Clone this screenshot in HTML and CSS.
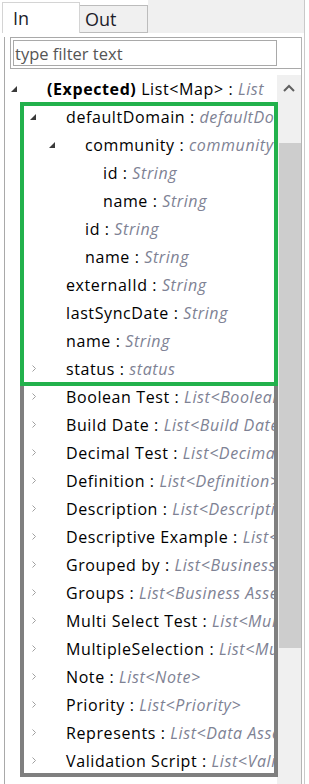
FILE: index.html
```html
<!DOCTYPE html>
<html lang="en">
<head>
    <meta charset="UTF-8">
    <meta name="viewport" content="width=device-width, initial-scale=1.0">
    <title>Mapping tree</title>
    <link rel="stylesheet" href="styles.css">
</head>
<body>
    <div class="view">
        <div class="tabbar">
            <div class="tab active">In</div>
            <div class="tab">Out</div>
            <div class="tab-fill"></div>
        </div>

        <div class="panel">
            <div class="filter">
                <input class="filter-field" type="text" placeholder="type filter text">
            </div>

            <div class="tree">
                <div class="rows">
                    <div class="row l0">
                        <span class="tw"><svg viewBox="0 0 7 8" width="7" height="8"><polygon class="open" points="6,1 6,7 0,7"/></svg></span>
                        <span class="lbl"><b>(Expected)</b> List&lt;Map&gt; : <i>List</i></span>
                    </div>
                    <div class="row l1">
                        <span class="tw"><svg viewBox="0 0 7 8" width="7" height="8"><polygon class="open" points="6,1 6,7 0,7"/></svg></span>
                        <span class="lbl">defaultDomain : <i>defaultDomain</i></span>
                    </div>
                    <div class="row l2">
                        <span class="tw"><svg viewBox="0 0 7 8" width="7" height="8"><polygon class="open" points="6,1 6,7 0,7"/></svg></span>
                        <span class="lbl">community : <i>community</i></span>
                    </div>
                    <div class="row l3">
                        <span class="tw"></span>
                        <span class="lbl">id : <i>String</i></span>
                    </div>
                    <div class="row l3">
                        <span class="tw"></span>
                        <span class="lbl">name : <i>String</i></span>
                    </div>
                    <div class="row l2">
                        <span class="tw"></span>
                        <span class="lbl">id : <i>String</i></span>
                    </div>
                    <div class="row l2">
                        <span class="tw"></span>
                        <span class="lbl">name : <i>String</i></span>
                    </div>
                    <div class="row l1">
                        <span class="tw"></span>
                        <span class="lbl">externalId : <i>String</i></span>
                    </div>
                    <div class="row l1">
                        <span class="tw"></span>
                        <span class="lbl">lastSyncDate : <i>String</i></span>
                    </div>
                    <div class="row l1">
                        <span class="tw"></span>
                        <span class="lbl">name : <i>String</i></span>
                    </div>
                    <div class="row l1">
                        <span class="tw"><svg viewBox="0 0 7 8" width="7" height="8"><path class="shut" d="M2.5 0.5 L5.5 3.5 L2.5 6.5"/></svg></span>
                        <span class="lbl">status : <i>status</i></span>
                    </div>
                    <div class="row l1">
                        <span class="tw"><svg viewBox="0 0 7 8" width="7" height="8"><path class="shut" d="M2.5 0.5 L5.5 3.5 L2.5 6.5"/></svg></span>
                        <span class="lbl">Boolean Test : <i>List&lt;Boolean Test&gt;</i></span>
                    </div>
                    <div class="row l1">
                        <span class="tw"><svg viewBox="0 0 7 8" width="7" height="8"><path class="shut" d="M2.5 0.5 L5.5 3.5 L2.5 6.5"/></svg></span>
                        <span class="lbl">Build Date : <i>List&lt;Build Date&gt;</i></span>
                    </div>
                    <div class="row l1">
                        <span class="tw"><svg viewBox="0 0 7 8" width="7" height="8"><path class="shut" d="M2.5 0.5 L5.5 3.5 L2.5 6.5"/></svg></span>
                        <span class="lbl">Decimal Test : <i>List&lt;Decimal Test&gt;</i></span>
                    </div>
                    <div class="row l1">
                        <span class="tw"><svg viewBox="0 0 7 8" width="7" height="8"><path class="shut" d="M2.5 0.5 L5.5 3.5 L2.5 6.5"/></svg></span>
                        <span class="lbl">Definition : <i>List&lt;Definition&gt;</i></span>
                    </div>
                    <div class="row l1">
                        <span class="tw"><svg viewBox="0 0 7 8" width="7" height="8"><path class="shut" d="M2.5 0.5 L5.5 3.5 L2.5 6.5"/></svg></span>
                        <span class="lbl">Description : <i>List&lt;Description&gt;</i></span>
                    </div>
                    <div class="row l1">
                        <span class="tw"><svg viewBox="0 0 7 8" width="7" height="8"><path class="shut" d="M2.5 0.5 L5.5 3.5 L2.5 6.5"/></svg></span>
                        <span class="lbl">Descriptive Example : <i>List&lt;Descriptive Example&gt;</i></span>
                    </div>
                    <div class="row l1">
                        <span class="tw"><svg viewBox="0 0 7 8" width="7" height="8"><path class="shut" d="M2.5 0.5 L5.5 3.5 L2.5 6.5"/></svg></span>
                        <span class="lbl">Grouped by : <i>List&lt;Business Asset&gt;</i></span>
                    </div>
                    <div class="row l1">
                        <span class="tw"><svg viewBox="0 0 7 8" width="7" height="8"><path class="shut" d="M2.5 0.5 L5.5 3.5 L2.5 6.5"/></svg></span>
                        <span class="lbl">Groups : <i>List&lt;Business Asset&gt;</i></span>
                    </div>
                    <div class="row l1">
                        <span class="tw"><svg viewBox="0 0 7 8" width="7" height="8"><path class="shut" d="M2.5 0.5 L5.5 3.5 L2.5 6.5"/></svg></span>
                        <span class="lbl">Multi Select Test : <i>List&lt;Multi Select Test&gt;</i></span>
                    </div>
                    <div class="row l1">
                        <span class="tw"><svg viewBox="0 0 7 8" width="7" height="8"><path class="shut" d="M2.5 0.5 L5.5 3.5 L2.5 6.5"/></svg></span>
                        <span class="lbl">MultipleSelection : <i>List&lt;MultipleSelection&gt;</i></span>
                    </div>
                    <div class="row l1">
                        <span class="tw"><svg viewBox="0 0 7 8" width="7" height="8"><path class="shut" d="M2.5 0.5 L5.5 3.5 L2.5 6.5"/></svg></span>
                        <span class="lbl">Note : <i>List&lt;Note&gt;</i></span>
                    </div>
                    <div class="row l1">
                        <span class="tw"><svg viewBox="0 0 7 8" width="7" height="8"><path class="shut" d="M2.5 0.5 L5.5 3.5 L2.5 6.5"/></svg></span>
                        <span class="lbl">Priority : <i>List&lt;Priority&gt;</i></span>
                    </div>
                    <div class="row l1">
                        <span class="tw"><svg viewBox="0 0 7 8" width="7" height="8"><path class="shut" d="M2.5 0.5 L5.5 3.5 L2.5 6.5"/></svg></span>
                        <span class="lbl">Represents : <i>List&lt;Data Asset&gt;</i></span>
                    </div>
                    <div class="row l1">
                        <span class="tw"><svg viewBox="0 0 7 8" width="7" height="8"><path class="shut" d="M2.5 0.5 L5.5 3.5 L2.5 6.5"/></svg></span>
                        <span class="lbl">Validation Script : <i>List&lt;Validation Script&gt;</i></span>
                    </div>
                </div>

                <div class="scrollbar">
                    <div class="sb-up">
                        <svg viewBox="0 0 12 8" width="12" height="8"><path d="M1 7 L6 2 L11 7"/></svg>
                    </div>
                    <div class="sb-thumb"></div>
                </div>

                <!-- marcações da captura -->
                <div class="mark mark-green"></div>
                <div class="mark mark-grey"></div>
            </div>
        </div>
    </div>
</body>
</html>
```

FILE: styles.css
```css
body {
    margin: 0;
    background-color: #ffffff;
    font-family: "Open Sans", "Noto Sans", sans-serif;
    overflow: hidden;
}

/* janela inteira */
.view {
    width: 304px;
    height: 784px;
    border-right: 1px solid #c9c9c9;
}

/* abas In / Out */
.tabbar {
    display: flex;
    align-items: flex-end;
    height: 33px;
}

.tab {
    box-sizing: border-box;
    height: 28px;
    width: 68px;
    padding-left: 5px;
    font-size: 18px;
    line-height: 27px;
    color: #1d1d2b;
    background-color: #f0f0f0;
    border: 1px solid #bcbcbc;
    border-left: none;
}

.tab.active {
    margin-left: 2px;
    width: 78px;
    height: 31px;
    padding-left: 10px;
    line-height: 31px;
    background-color: #ffffff;
    border: 1px solid #d4d4d4;
    border-bottom: none;
}

.tab-fill {
    flex: 1;
    align-self: stretch;
    background-color: #f0f0f0;
}

/* painel com filtro e arvore */
.panel {
    box-sizing: border-box;
    margin-left: 4px;
    width: 298px;
    height: 751px;
    border-left: 1px solid #a9a9a9;
    border-right: 1px solid #b4b4b4;
}

.filter {
    box-sizing: border-box;
    margin: 4px 0 0 5px;
    height: 32px;
    padding: 2px;
    border: 1px solid #a9a9a9;
    border-right: none;
}

.filter-field {
    box-sizing: border-box;
    display: block;
    width: 264px;
    height: 26px;
    margin: 0;
    padding: 0 0 0 1px;
    font-family: inherit;
    font-size: 16.5px;
    border: 1px solid #a9a9a9;
    outline: none;
}

.filter-field::placeholder {
    color: #555555;
}

.tree {
    position: relative;
    display: flex;
    margin-top: 6px;
    height: 709px;
    overflow: hidden;
}

.rows {
    width: 272px;
    flex: none;
    overflow: hidden;
}

.row {
    display: flex;
    height: 28px;
    white-space: nowrap;
    font-size: 16px;
    letter-spacing: 0.6px;
    color: #000000;
}

.row.l0 { padding-left: 6px; }
.row.l1 { padding-left: 25px; }
.row.l2 { padding-left: 44px; }
.row.l3 { padding-left: 62px; }

.tw {
    flex: none;
    width: 36px;
}

.tw svg {
    display: block;
    margin-top: 10px;
}

.open {
    fill: #3a3a3a;
}

.shut {
    fill: none;
    stroke: #a0a0a0;
    stroke-width: 1;
}

.lbl {
    line-height: 28px;
}

.lbl i {
    color: #7e8294;
}

/* barra de rolagem */
.scrollbar {
    flex: none;
    width: 24px;
    background-color: #f0f0f0;
}

.sb-up {
    height: 25px;
    display: flex;
    justify-content: center;
    align-items: center;
}

.sb-up svg path {
    fill: none;
    stroke: #606060;
    stroke-width: 2;
}

.sb-thumb {
    margin: 43px 0 0 2px;
    height: 505px;
    background-color: #cdcdcd;
}

/* retangulos de destaque */
.mark {
    position: absolute;
    left: 15px;
    width: 258px;
    box-sizing: border-box;
}

.mark-green {
    top: 27px;
    height: 284px;
    border: 4px solid #22b14c;
}

.mark-grey {
    top: 311px;
    height: 391px;
    border: 4px solid #7f7f7f;
    border-top: none;
}
```
